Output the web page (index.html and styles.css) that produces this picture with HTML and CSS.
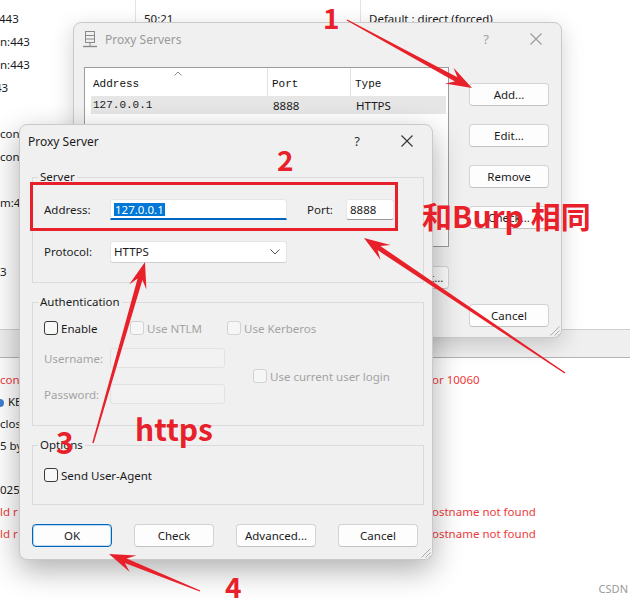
FILE: index.html
```html
<!DOCTYPE html>
<html>
<head>
<meta charset="utf-8">
<link rel="stylesheet" href="styles.css">
</head>
<body>
<div class="screen">
  <div class="app">
    <div class="table">
      <div class="trow"><div class="c1"></div><div class="c2"></div><div class="c3"></div></div>
      <div class="trow"><div class="c1 cut1">443</div><div class="c2">50:21</div><div class="c3">Default : direct (forced)</div></div>
      <div class="trow"><div class="c1">n:443</div><div class="c2"></div><div class="c3"></div></div>
      <div class="trow"><div class="c1">n:443</div><div class="c2"></div><div class="c3"></div></div>
      <div class="trow"><div class="c1 cut4">43</div><div class="c2"></div><div class="c3"></div></div>
      <div class="trow"><div class="c1"></div><div class="c2"></div><div class="c3"></div></div>
      <div class="trow"><div class="c1">con</div><div class="c2"></div><div class="c3"></div></div>
      <div class="trow"><div class="c1">con</div><div class="c2"></div><div class="c3"></div></div>
      <div class="trow"><div class="c1"></div><div class="c2"></div><div class="c3"></div></div>
      <div class="trow"><div class="c1">m:4</div><div class="c2"></div><div class="c3"></div></div>
      <div class="trow"><div class="c1"></div><div class="c2"></div><div class="c3"></div></div>
      <div class="trow"><div class="c1"></div><div class="c2"></div><div class="c3"></div></div>
      <div class="trow"><div class="c1">3</div><div class="c2"></div><div class="c3"></div></div>
    </div>
    <div class="band"></div>
    <div class="log">
      <div class="lg"><span class="ll red">con</span><span class="lr red">or 10060</span></div>
      <div class="lg"><span class="ll"><span class="dot"></span>KB</span><span class="lr"></span></div>
      <div class="lg"><span class="ll">clos</span><span class="lr"></span></div>
      <div class="lg"><span class="ll">5 by</span><span class="lr"></span></div>
      <div class="lg"><span class="ll"></span><span class="lr"></span></div>
      <div class="lg"><span class="ll">025</span><span class="lr"></span></div>
      <div class="lg"><span class="ll red">ld r</span><span class="lr red">ostname not found</span></div>
      <div class="lg"><span class="ll red">ld r</span><span class="lr red">ostname not found</span></div>
    </div>
    <div class="wm">CSDN</div>
  </div>

  <div class="win win-list">
    <div class="titlebar">
      <span class="ticon">
        <svg width="16" height="18" viewBox="0 0 16 18">
          <rect x="3.5" y="0.5" width="9" height="11" fill="none" stroke="#8a8a8a"/>
          <line x1="3.5" y1="4.5" x2="12.5" y2="4.5" stroke="#8a8a8a"/>
          <line x1="3.5" y1="8" x2="12.5" y2="8" stroke="#8a8a8a"/>
          <line x1="8" y1="11.5" x2="8" y2="15" stroke="#8a8a8a"/>
          <line x1="1" y1="15.5" x2="15" y2="15.5" stroke="#8a8a8a" stroke-width="1.4"/>
        </svg>
      </span>
      <span class="title inactive">Proxy Servers</span>
      <span class="tbtn help inactive">?</span>
      <span class="tbtn"><svg width="12" height="12" viewBox="0 0 12 12"><path d="M0.5 0.5L11.5 11.5M11.5 0.5L0.5 11.5" stroke="#9a9a9a" stroke-width="1.1"/></svg></span>
    </div>
    <div class="lbody">
      <div class="lmain">
        <div class="listbox">
          <div class="lhead">
            <div class="hc hc1">Address<svg class="sort" width="8" height="5" viewBox="0 0 8 5"><path d="M0.5 4.5L4 1L7.5 4.5" fill="none" stroke="#8a8a8a"/></svg></div>
            <div class="hc hc2">Port</div>
            <div class="hc hc3">Type</div>
          </div>
          <div class="lsel">
            <div class="dc dc1">127.0.0.1</div>
            <div class="dc dc2">8888</div>
            <div class="dc dc3">HTTPS</div>
          </div>
        </div>
        <div class="lfoot"><button class="btn">Bypass List...</button></div>
      </div>
      <div class="lside">
        <button class="btn">Add...</button>
        <button class="btn">Edit...</button>
        <button class="btn">Remove</button>
        <button class="btn">Check...</button>
        <button class="btn push">Cancel</button>
      </div>
    </div>
    <svg class="grip" width="11" height="11" viewBox="0 0 11 11"><path d="M10.5 1.5L1.5 10.5M10.5 5.5L5.5 10.5M10.5 9L9 10.5" stroke="#a8a8a8"/></svg>
  </div>

  <div class="win win-edit">
    <div class="titlebar">
      <span class="title">Proxy Server</span>
      <span class="tbtn help">?</span>
      <span class="tbtn"><svg width="12" height="12" viewBox="0 0 12 12"><path d="M0.5 0.5L11.5 11.5M11.5 0.5L0.5 11.5" stroke="#333" stroke-width="1.1"/></svg></span>
    </div>
    <div class="ebody">
      <fieldset class="grp grp-server">
        <legend>Server</legend>
        <div class="frow r1">
          <span class="flabel">Address:</span>
          <div class="input addr"><span class="selected">127.0.0.1</span></div>
          <span class="plabel">Port:</span>
          <div class="input port">8888</div>
        </div>
        <div class="frow r2">
          <span class="flabel">Protocol:</span>
          <div class="select">HTTPS<svg width="10" height="6" viewBox="0 0 10 6"><path d="M0.5 0.5L5 5L9.5 0.5" fill="none" stroke="#555"/></svg></div>
        </div>
      </fieldset>
      <fieldset class="grp grp-auth">
        <legend>Authentication</legend>
        <div class="checks">
          <span class="chk w86"><span class="box"></span>Enable</span>
          <span class="chk dis w97"><span class="box"></span>Use NTLM</span>
          <span class="chk dis"><span class="box"></span>Use Kerberos</span>
        </div>
        <div class="cred">
          <div class="credfields">
            <div class="frow r3"><span class="flabel dis">Username:</span><div class="input off"></div></div>
            <div class="frow r4"><span class="flabel dis">Password:</span><div class="input off"></div></div>
          </div>
          <span class="chk dis"><span class="box"></span>Use current user login</span>
        </div>
      </fieldset>
      <fieldset class="grp grp-opt">
        <legend>Options</legend>
        <span class="chk"><span class="box"></span>Send User-Agent</span>
      </fieldset>
      <div class="ebtns">
        <button class="btn def">OK</button>
        <button class="btn">Check</button>
        <button class="btn">Advanced...</button>
        <button class="btn">Cancel</button>
      </div>
    </div>
    <svg class="grip" width="11" height="11" viewBox="0 0 11 11"><path d="M10.5 1.5L1.5 10.5M10.5 5.5L5.5 10.5M10.5 9L9 10.5" stroke="#a8a8a8"/></svg>
  </div>

  <div class="notes">
    <svg class="ink" width="630" height="609" viewBox="0 0 630 609">
      <rect x="31.5" y="183.5" width="365" height="46" fill="none" stroke="#e8202a" stroke-width="3"/>
      <polygon points="346.7,20.6 455.0,81.6 444.9,83.5 472,88 453.5,67.7 457.4,77.2 347.3,19.4" fill="#e8202a"/>
      <polygon points="565.4,372.4 380.3,245.9 390.6,245.0 364,238 380.6,260.0 377.5,250.1 564.6,373.6" fill="#e8202a"/>
      <polygon points="93.7,443.2 142.4,280.0 146.4,289.5 145,262 129.2,284.5 137.6,278.6 92.3,442.8" fill="#e8202a"/>
      <polygon points="200.3,590.4 126.6,558.5 136.5,555.5 109,554 129.7,572.1 124.8,563.1 199.7,591.6" fill="#e8202a"/>
    </svg>
    <span class="note n1">1</span>
    <span class="note n2">2</span>
    <span class="note n3">3</span>
    <span class="note n4">4</span>
    <span class="note same">和Burp 相同</span>
    <span class="note https">https</span>
  </div>
</div>
</body>
</html>
```

FILE: styles.css
```css
* { box-sizing: border-box; }
html, body { margin: 0; padding: 0; }
body {
  width: 630px; height: 609px; overflow: hidden; background: #fff;
  font-family: "Noto Sans", "Open Sans", sans-serif; font-size: 11.5px; color: #1b1b1b;
}
.screen { position: relative; width: 630px; height: 609px; overflow: hidden; }

/* background application */
.app { display: flex; flex-direction: column; height: 100%; }
.table { margin-top: -16px; height: 345px; }
.trow { display: grid; grid-template-columns: 135px 225px 1fr; height: 23px; line-height: 23px; white-space: nowrap; }
.trow > div { overflow: hidden; }
.c2, .c3 { border-left: 1px solid #e3e3e3; padding-left: 8px; }
.cut1 { text-indent: -1px; }
.cut4 { text-indent: -5px; }
.band { height: 29px; background: #efefef; border-top: 1px solid #cfcfcf; border-bottom: 1px solid #b5b5b5; }
.log { padding-top: 11px; }
.lg { display: grid; grid-template-columns: 432px 1fr; height: 22px; line-height: 22px; white-space: nowrap; }
.ll, .lr { overflow: hidden; }
.red { color: #ee3b3b; }
.dot { display: inline-block; width: 8px; height: 8px; border-radius: 50%; background: #3f7fd0; margin-left: -4px; margin-right: 4px; vertical-align: -1px; }
.wm { margin-top: auto; padding: 0 2px 13px 0; text-align: right; font-size: 11px; color: #9a9a9a; }

/* windows */
.win {
  position: absolute; background: #f0f0f0; border: 1px solid #c9c9c9; border-radius: 8px;
  display: flex; flex-direction: column;
}
.win-list { left: 73px; top: 22px; width: 489px; height: 316px; box-shadow: 0 6px 22px rgba(0,0,0,0.18); }
.win-edit { left: 19px; top: 124px; width: 414px; height: 436px; box-shadow: 0 10px 30px rgba(0,0,0,0.32); }
.titlebar { display: flex; align-items: center; height: 32px; flex: none; padding-left: 8px; }
.ticon { width: 16px; height: 18px; display: flex; margin-right: 7px; margin-top: 1px; }
.title { font-size: 12px; color: #1b1b1b; }
.title.inactive { color: #9a9a9a; }
.tbtn { width: 50px; height: 32px; display: flex; align-items: center; justify-content: center; font-size: 13px; color: #333; }
.tbtn.inactive { color: #a0a0a0; }
.help { margin-left: auto; }
.grip { position: absolute; right: 1px; bottom: 1px; }

.btn {
  height: 23px; width: 80px; padding: 0; background: #fdfdfd; white-space: nowrap;
  border: 1px solid #d3d3d3; border-bottom-color: #c2c2c2; border-radius: 4px;
  font-family: "Noto Sans", "Open Sans", sans-serif; font-size: 11.5px; color: #1b1b1b;
}
.btn.def { border-color: #0067c0; box-shadow: inset 0 0 0 1px rgba(0,103,192,0.25); }

/* Proxy Servers list dialog */
.lbody { flex: 1; display: flex; padding: 12px 0 10px 10px; }
.lmain { width: 365px; display: flex; flex-direction: column; }
.listbox { height: 180px; background: #fff; border: 1px solid #9c9c9c; }
.lhead { display: grid; grid-template-columns: 182px 83px 1fr; height: 28px; }
.hc { font-family: "Liberation Mono", monospace; font-size: 11px; color: #111; display: flex; align-items: center; padding-top: 3px; position: relative; }
.hc1 { padding-left: 8px; }
.hc2, .hc3 { border-left: 1px solid #e2e2e2; padding-left: 4px; }
.sort { position: absolute; left: 89px; top: 3px; }
.lsel { display: grid; grid-template-columns: 176px 83px 1fr; height: 18px; margin: 0 2px 0 6px; background: #e6e6e6; align-items: center; }
.dc { white-space: nowrap; }
.dc1 { font-family: "Liberation Mono", monospace; font-size: 11px; padding-left: 2px; }
.dc2, .dc3 { padding-left: 6px; }
.lfoot { display: flex; justify-content: flex-end; margin-top: 19px; }
.lside { width: 80px; margin-left: 20px; display: flex; flex-direction: column; gap: 18px; padding-top: 16px; }
.push { margin-top: auto; }

/* Proxy Server edit dialog */
.ebody { flex: 1; padding: 12px 8px 0 12px; display: flex; flex-direction: column; }
.grp { margin: 0; padding: 0 11px; border: 1px solid #dadada; min-width: 0; }
.grp legend { margin-left: -6px; padding: 0 2px; line-height: 16px; font-size: 11.5px; color: #1b1b1b; }
.grp-server { padding-bottom: 20px; }
.grp-auth { margin-top: 11px; padding-bottom: 21px; }
.grp-opt { margin-top: 11px; padding-top: 14px; padding-bottom: 21px; }
.frow { display: flex; align-items: center; }
.r1 { margin-top: 14px; height: 21px; }
.r2 { margin-top: 21px; height: 21px; }
.flabel { width: 66px; flex: none; }
.plabel { margin-left: 20px; width: 39px; flex: none; }
.dis { color: #a3a3a3; }
.input { height: 21px; background: #fff; border: 1px solid #e6e6e6; border-radius: 3px; padding-left: 3px; display: flex; align-items: center; }
.addr { width: 177px; border-bottom: 2px solid #0067c0; border-radius: 3px 3px 0 0; }
.selected { background: #0078d7; color: #fff; line-height: 13px; padding: 0 1px; }
.port { width: 48px; border-bottom-color: #9a9a9a; }
.select { width: 177px; height: 22px; background: #fff; border: 1px solid #e3e3e3; border-bottom-color: #cfcfcf; border-radius: 3px; padding: 0 6px 0 3px; display: flex; align-items: center; justify-content: space-between; }
.checks { display: flex; margin-top: 10px; height: 16px; }
.chk { display: inline-flex; align-items: center; gap: 3px; height: 16px; white-space: nowrap; }
.w86 { width: 86px; }
.w97 { width: 97px; }
.box { width: 14px; height: 14px; border: 1px solid #3a3a3a; border-radius: 3px; background: #f8f8f8; flex: none; }
.chk.dis .box { border-color: #d2d2d2; background: #f6f6f6; }
.cred { display: flex; align-items: center; margin-top: 12px; }
.credfields { width: 181px; }
.r4 { margin-top: 16px; }
.input.off { width: 115px; height: 20px; background: #f2f2f2; border-color: #e2e2e2; }
.cred > .chk { margin-left: 28px; }
.grp-opt .chk { display: flex; }
.ebtns { display: flex; gap: 22px; margin-top: 19px; }

/* annotations */
.notes { position: absolute; left: 0; top: 0; width: 630px; height: 609px; pointer-events: none; }
.ink { position: absolute; left: 0; top: 0; }
.note { position: absolute; font-family: "Noto Sans CJK SC", sans-serif; font-weight: 700; color: #e8202a; line-height: 1; white-space: nowrap; }
.n1 { left: 323px; top: 3px; font-size: 28px; }
.n2 { left: 277px; top: 145px; font-size: 28px; }
.n3 { left: 56px; top: 426px; font-size: 30px; }
.n4 { left: 225px; top: 572px; font-size: 28px; }
.same { left: 422px; top: 200px; font-size: 30px; }
.https { left: 135px; top: 413px; font-size: 30px; }
```
